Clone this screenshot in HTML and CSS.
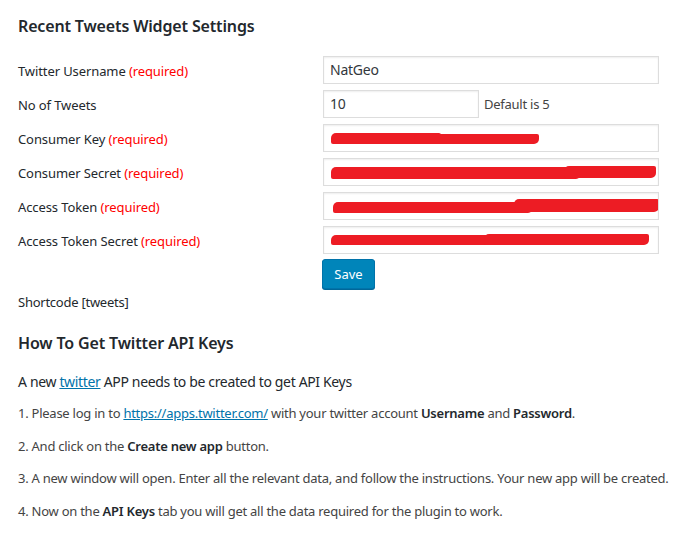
FILE: index.html
```html
<!DOCTYPE html>
<html>
<head>
<meta charset="utf-8">
<link rel="stylesheet" href="styles.css">
</head>
<body>
<div class="wrap">
  <h2 class="title">Recent Tweets Widget Settings</h2>
  <div class="form">
    <div class="label">Twitter Username <span class="req">(required)</span></div>
    <div class="cell"><div class="field">NatGeo</div></div>

    <div class="label">No of Tweets</div>
    <div class="cell"><div class="field small">10</div><span class="hint">Default is 5</span></div>

    <div class="label">Consumer Key <span class="req">(required)</span></div>
    <div class="cell"><div class="field"><span class="redact r1"></span><span class="redact r1b"></span></div></div>

    <div class="label">Consumer Secret <span class="req">(required)</span></div>
    <div class="cell"><div class="field"><span class="redact r2"></span><span class="redact r2b"></span></div></div>

    <div class="label">Access Token <span class="req">(required)</span></div>
    <div class="cell"><div class="field"><span class="redact r3"></span><span class="redact r3b"></span></div></div>

    <div class="label">Access Token Secret <span class="req">(required)</span></div>
    <div class="cell"><div class="field"><span class="redact r4"></span><span class="redact r4b"></span></div></div>

    <div class="label"></div>
    <div class="cell btn-cell"><button class="button">Save</button></div>
  </div>
  <p class="shortcode">Shortcode [tweets]</p>

  <h2 class="title second">How To Get Twitter API Keys</h2>
  <p class="intro">A new <a href="#">twitter</a> APP needs to be created to get API Keys</p>
  <p>1. Please log in to <a href="#">https://apps.twitter.com/</a> with your twitter account <b>Username</b> and <b>Password</b>.</p>
  <p>2. And click on the <b>Create new app</b> button.</p>
  <p>3. A new window will open. Enter all the relevant data, and follow the instructions. Your new app will be created.</p>
  <p>4. Now on the <b>API Keys</b> tab you will get all the data required for the plugin to work.</p>
</div>
</body>
</html>
```
FILE: styles.css
```css
* { box-sizing: border-box; }
html, body { margin: 0; padding: 0; background: #fff; }
body {
  font-family: "Noto Sans", "Open Sans", sans-serif;
  font-size: 13px;
  letter-spacing: -0.25px;
  color: #444;
  line-height: 1.4;
}
.wrap { padding: 14px 0 0 18px; width: 697px; }
.title {
  font-size: 16px;
  font-weight: 600;
  letter-spacing: -0.15px;
  color: #23282d;
  margin: 0;
  line-height: 24px;
}
.form {
  margin-top: 18px;
  display: grid;
  grid-template-columns: 305px 336px;
  row-gap: 6px;
}
.label {
  color: #23282d;
  line-height: 30px;
  height: 28px;
  letter-spacing: -0.1px;
}
.req { color: #f00; }
.cell { display: flex; align-items: center; }
.field {
  position: relative;
  width: 336px;
  height: 28px;
  border: 1px solid #ddd;
  box-shadow: inset 0 1px 2px rgba(0,0,0,.07);
  padding: 0 6px;
  display: flex;
  align-items: center;
  color: #32373c;
  font-size: 14px;
  overflow: hidden;
}
.field.small { width: 156px; }
.hint { margin-left: 5px; color: #444; }
.redact {
  position: absolute;
  top: 8px;
  left: 7px;
  height: 11px;
  background: #ed1c24;
  border-radius: 5px 2px 5px 2px;
}
.r1 { width: 110px; top: 8px; }
.r1b { left: 90px; width: 125px; top: 9px; height: 10px; }
.r2 { width: 250px; top: 8px; height: 12px; }
.r2b { left: 240px; width: 92px; top: 7px; height: 12px; }
.r3 { width: 200px; left: 9px; top: 9px; }
.r3b { left: 190px; width: 145px; top: 6px; height: 13px; }
.r4 { width: 170px; top: 8px; height: 10px; }
.r4b { left: 160px; width: 165px; top: 7px; height: 11px; }
.btn-cell { margin-top: -1px; }
.button {
  font-family: inherit;
  font-size: 13px;
  letter-spacing: 0;
  color: #fff;
  background: #0085ba;
  border: 1px solid #0073aa;
  border-radius: 3px;
  box-shadow: 0 1px 0 #006799;
  height: 30px;
  width: 53px;
  padding: 0;
  margin-left: -1px;
}
p { margin: 0 0 13px; line-height: 19.5px; }
.shortcode { margin-top: 4px; color: #23282d; }
.second { margin-top: 18px; }
.intro { margin-top: 17px; margin-bottom: 13px; color: #23282d; font-size: 14px; letter-spacing: -0.35px; }
b { font-weight: 600; color: #23282d; }
a { color: #0073aa; text-decoration: underline; }
```
